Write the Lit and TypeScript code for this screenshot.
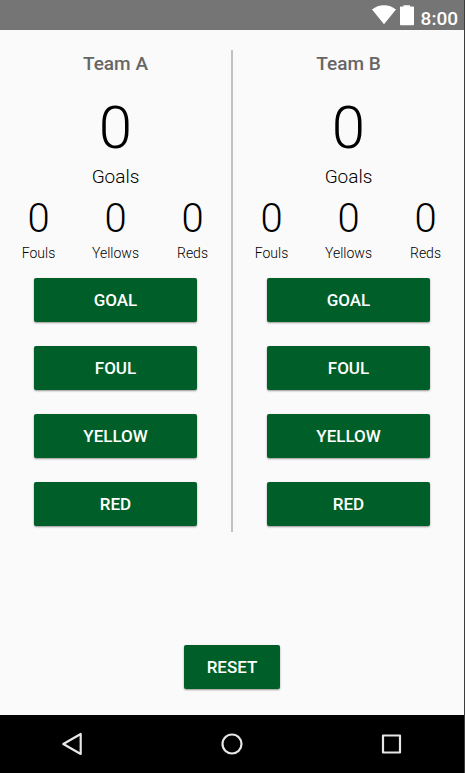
import { LitElement, html, css, svg } from "lit";
import { customElement, property, state } from "lit/decorators.js";

type Score = { goals: number; fouls: number; yellows: number; reds: number };
const emptyScore = (): Score => ({ goals: 0, fouls: 0, yellows: 0, reds: 0 });

const buttonStyles = css`
  button {
    height: 44px;
    padding: 0 23px;
    border: 0;
    border-radius: 2px;
    background: #005f29;
    color: #fff;
    font: 500 17px/44px Roboto, sans-serif;
    text-transform: uppercase;
    box-shadow: 0 1px 2px rgba(0, 0, 0, 0.4);
    cursor: pointer;
  }
`;

@customElement("status-bar")
class StatusBar extends LitElement {
  static styles = css`
    :host {
      display: flex;
      justify-content: flex-end;
      height: 30px;
      padding-right: 6px;
      background: #757575;
      color: #fff;
      font: 500 19px/22px Roboto, sans-serif;
    }
    .icons {
      width: 44px;
      height: 30px;
      margin-right: 5px;
    }
    .time {
      padding-top: 8px;
    }
  `;
  render() {
    return html`
      <svg class="icons" viewBox="0 0 44 30" fill="#fff" aria-hidden="true">
        <path d="M0 9.6Q5.3 5.3 12 5.3T24 9.6L12 24.3Z" />
        <path d="M31.500 5.200h6.500v1.300h3.200q.8 0 .8.8v17.200q0 .8-.8.8h-12.400q-.8 0-.8-.8v-17.200q0-.8.8-.8h2.700Z" />
      </svg>
      <span class="time">8:00</span>
    `;
  }
}

@customElement("team-panel")
class TeamPanel extends LitElement {
  @property() name = "";
  @property({ attribute: false }) score: Score = emptyScore();

  static styles = [
    buttonStyles,
    css`
      :host {
        display: block;
        text-align: center;
        font-family: Roboto, sans-serif;
        font-weight: 300;
        color: #000;
      }
      h2 {
        margin: 0;
        font-size: 19px;
        font-weight: 500;
        line-height: 28px;
        color: #666;
      }
      .figure {
        display: flex;
        flex-direction: column;
      }
      .goals {
        padding-top: 14px;
      }
      .goals output {
        font-size: 60px;
        line-height: 72px;
      }
      .goals label {
        font-size: 19px;
        line-height: 26px;
      }
      .cards {
        display: grid;
        grid-template-columns: repeat(3, 1fr);
        padding-top: 4px;
      }
      .cards output {
        font-size: 40px;
        line-height: 50px;
      }
      .cards label {
        font-size: 14px;
        line-height: 18px;
      }
      .actions {
        display: grid;
        gap: 24px;
        padding: 16px 34px 6px;
      }
    `,
  ];

  private figure(key: keyof Score, label: string) {
    return html`
      <output id=${key}>${this.score[key]}</output>
      <label for=${key}>${label}</label>
    `;
  }

  private add(key: keyof Score) {
    this.dispatchEvent(new CustomEvent("add", { detail: key }));
  }

  render() {
    return html`
      <h2>${this.name}</h2>
      <div class="figure goals">${this.figure("goals", "Goals")}</div>
      <div class="cards">
        <div class="figure">${this.figure("fouls", "Fouls")}</div>
        <div class="figure">${this.figure("yellows", "Yellows")}</div>
        <div class="figure">${this.figure("reds", "Reds")}</div>
      </div>
      <div class="actions">
        <button @click=${() => this.add("goals")}>Goal</button>
        <button @click=${() => this.add("fouls")}>Foul</button>
        <button @click=${() => this.add("yellows")}>Yellow</button>
        <button @click=${() => this.add("reds")}>Red</button>
      </div>
    `;
  }
}

@customElement("nav-bar")
class NavBar extends LitElement {
  static styles = css`
    :host {
      display: flex;
      justify-content: center;
      gap: 56px;
      height: 58px;
      background: #000;
    }
    button {
      width: 104px;
      height: 58px;
      padding: 0;
      border: 0;
      background: none;
    }
    svg {
      display: block;
      width: 28px;
      height: 28px;
      margin: 0 auto;
    }
  `;
  private key(label: string, shape: unknown) {
    return html`
      <button aria-label=${label}>
        <svg viewBox="0 0 28 28" fill="none" stroke="#e6e6e6" stroke-width="2.200" stroke-linejoin="round">${shape}</svg>
      </button>
    `;
  }
  render() {
    return html`
      ${this.key("Back", svg`<path d="M5.300 14L22.700 4V24Z" />`)}
      ${this.key("Home", svg`<circle cx="14" cy="14" r="9.500" />`)}
      ${this.key("Recent apps", svg`<path d="M5 5.500h17v17h-17Z" />`)}
    `;
  }
}

@customElement("app-root")
class AppRoot extends LitElement {
  @state() private scores: Score[] = [emptyScore(), emptyScore()];

  static styles = [
    buttonStyles,
    css`
      :host {
        display: flex;
        flex-direction: column;
        box-sizing: border-box;
        min-height: 100vh;
        border-right: 1px solid #3c3c3c;
        background: #fafafa;
      }
      main {
        display: flex;
        flex: 1;
        flex-direction: column;
        justify-content: space-between;
        align-items: center;
        padding: 20px 0 26px;
      }
      .teams {
        display: grid;
        grid-template-columns: 1fr 2px 1fr;
        align-self: stretch;
      }
      .divider {
        background: #c2c2c2;
      }
    `,
  ];

  private add(team: number, key: keyof Score) {
    this.scores = this.scores.map((s, i) => (i === team ? { ...s, [key]: s[key] + 1 } : s));
  }

  private reset() {
    this.scores = [emptyScore(), emptyScore()];
  }

  render() {
    return html`
      <status-bar></status-bar>
      <main>
        <div class="teams">
          <team-panel name="Team A" .score=${this.scores[0]} @add=${(e: CustomEvent) => this.add(0, e.detail)}></team-panel>
          <div class="divider"></div>
          <team-panel name="Team B" .score=${this.scores[1]} @add=${(e: CustomEvent) => this.add(1, e.detail)}></team-panel>
        </div>
        <button @click=${this.reset}>Reset</button>
      </main>
      <nav-bar></nav-bar>
    `;
  }
}
